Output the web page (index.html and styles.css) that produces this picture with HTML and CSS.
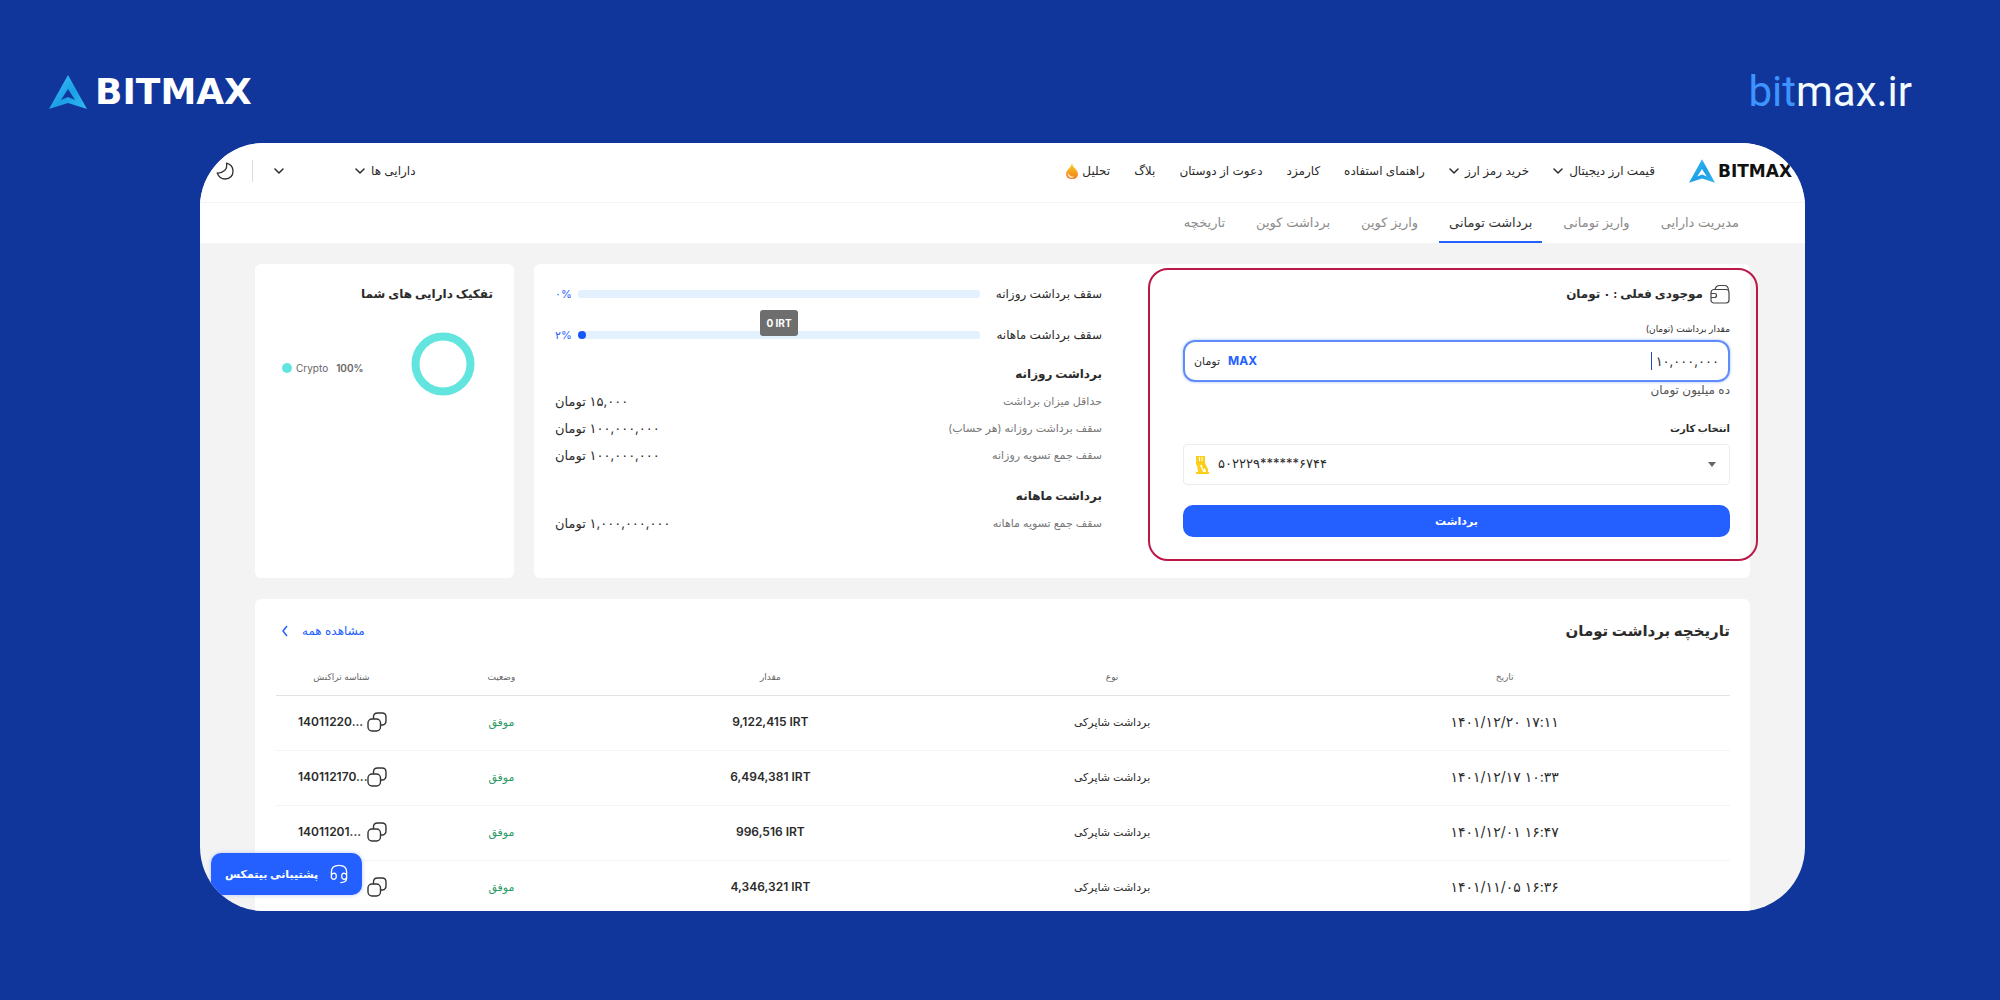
FILE: index.html
```html
<!DOCTYPE html>
<html lang="fa" dir="rtl">
<head>
<meta charset="utf-8">
<title>برداشت تومانی</title>
<meta name="viewport" content="width=device-width, initial-scale=1">
<link rel="stylesheet" href="styles.css">
</head>
<body>
<svg width="0" height="0" class="defs" aria-hidden="true">
  <defs>
    <linearGradient id="mark-fill" x1="0" y1="0" x2="1" y2="1">
      <stop offset="0" stop-color="#41c6f7"/><stop offset=".55" stop-color="#1b9fe8"/><stop offset="1" stop-color="#33b9ef"/>
    </linearGradient>
    <linearGradient id="flame-fill" x1="0" y1="0" x2="0" y2="1">
      <stop offset="0" stop-color="#f7d21c"/><stop offset="1" stop-color="#f47c20"/>
    </linearGradient>
    <symbol id="mark" viewBox="0 0 38 34">
      <path fill="url(#mark-fill)" fill-rule="evenodd" d="M19 0 38 34 19 28 0 34ZM19 14 12 25 19 22 26 25Z"/>
    </symbol>
    <symbol id="down" viewBox="0 0 10 8">
      <path d="M1 2 5 6 9 2" fill="none" stroke="currentColor" stroke-width="1.500" stroke-linecap="round" stroke-linejoin="round"/>
    </symbol>
    <symbol id="copy" viewBox="0 0 20 20">
      <path d="M6.500 7V5Q6.500 1 10.500 1H15Q19 1 19 5V8.500Q19 12.500 15.500 13H13.500" fill="none" stroke="currentColor" stroke-width="1.4"/>
      <rect x="1" y="7" width="12.500" height="12" rx="4" fill="none" stroke="currentColor" stroke-width="1.4"/>
    </symbol>
  </defs>
</svg>

<header class="banner" dir="ltr">
  <a class="logo logo-large" href="#"><svg class="logo-mark"><use href="#mark"/></svg><span>BITMAX</span></a>
  <a class="site" href="#"><span class="site-accent">bit</span>max.ir</a>
</header>

<main class="shell">
  <div class="topbar">
    <a class="logo logo-small" dir="ltr" href="#"><svg class="logo-mark"><use href="#mark"/></svg><span>BITMAX</span></a>
    <nav class="nav">
      <a href="#">قیمت ارز دیجیتال <svg class="down"><use href="#down"/></svg></a>
      <a href="#">خرید رمز ارز <svg class="down"><use href="#down"/></svg></a>
      <a href="#">راهنمای استفاده</a>
      <a href="#">کارمزد</a>
      <a href="#">دعوت از دوستان</a>
      <a href="#">بلاگ</a>
      <a class="hot" href="#">تحلیل
        <svg class="flame" viewBox="0 0 12 16"><path fill="url(#flame-fill)" d="M6 0Q6 3 9 5.500Q12 8 12 11Q12 16 6 16Q0 16 0 11Q0 8 3 5.500Q5.500 3 6 0Z"/><path fill="#fde9c8" d="M2 10Q1.500 13 4 14.500Q6.500 15.500 8 13.500Q3.500 13.500 2 10Z"/></svg>
      </a>
    </nav>
    <div class="tools">
      <a href="#">دارایی ها <svg class="down"><use href="#down"/></svg></a>
      <button class="plain account" aria-label="حساب کاربری"><svg class="down"><use href="#down"/></svg></button>
      <button class="plain theme" aria-label="حالت شب"><svg class="moon" viewBox="0 0 18 18"><path d="M10.500 1.200Q11.500 6 8.500 8.500Q5.500 11.300 1.200 11Q3.500 17 9 17Q17 16.500 17 9Q17 3 10.500 1.200Z" fill="none" stroke="#333" stroke-width="1.3" stroke-linejoin="round"/></svg></button>
    </div>
  </div>

  <nav class="tabs">
    <a href="#">مدیریت دارایی</a>
    <a href="#">واریز تومانی</a>
    <a class="active" href="#">برداشت تومانی</a>
    <a href="#">واریز کوین</a>
    <a href="#">برداشت کوین</a>
    <a href="#">تاریخچه</a>
  </nav>

  <div class="content">
    <div class="panels">
      <section class="card withdraw">
        <div class="highlight"></div>
        <form class="form">
          <h2 class="balance">
            <svg class="wallet" viewBox="0 0 20 20"><rect x="1" y="5.500" width="18" height="13.500" rx="3" fill="none" stroke="#444" stroke-width="1.2"/><path d="M5 5.500Q6 1.500 9.500 1.500H14.500Q18 1.500 18.500 6M1 9.500H4.500Q6.500 9.500 6.500 11.500Q6.500 13.500 4.500 13.500H1" fill="none" stroke="#444" stroke-width="1.2"/></svg>
            موجودی فعلی : ۰ تومان
          </h2>
          <label class="small-label" for="amount">مقدار برداشت (تومان)</label>
          <div class="amount">
            <input id="amount" type="text" dir="ltr" value="۱۰,۰۰۰,۰۰۰">
            <span class="caret"></span>
            <button type="button" class="plain max">MAX</button>
            <span class="unit">تومان</span>
          </div>
          <p class="words">ده میلیون تومان</p>
          <label class="card-label" for="bank-card">انتخاب کارت</label>
          <div class="picker">
            <select id="bank-card" dir="ltr"><option>۵۰۲۲۲۹******۶۷۴۴</option></select>
            <svg class="bank" viewBox="0 0 14 18"><path fill="#fdcf1b" fill-rule="evenodd" d="M1 0H10V7L13 13V16H14V18H1V16H3L2 9H1ZM4 1V5H5V1ZM6.500 1V5H7.500V1ZM5 9 8 16H11L10 12 8 14 7 9Z"/></svg>
            <svg class="triangle" viewBox="0 0 8 5"><path fill="#666" d="M0 0H8L4 5Z"/></svg>
          </div>
          <button type="button" class="submit">برداشت</button>
        </form>
        <div class="limits">
          <div class="limit"><span class="limit-name">سقف برداشت روزانه</span><div class="track"></div><span class="percent" dir="ltr">۰%</span></div>
          <div class="limit"><span class="limit-name">سقف برداشت ماهانه</span><div class="track"><div class="fill" style="width:2%"></div><span class="tip" dir="ltr">0 IRT</span></div><span class="percent" dir="ltr">۲%</span></div>
          <h3>برداشت روزانه</h3>
          <dl>
            <div><dt>حداقل میزان برداشت</dt><dd>۱۵,۰۰۰ تومان</dd></div>
            <div><dt>سقف برداشت روزانه (هر حساب)</dt><dd>۱۰۰,۰۰۰,۰۰۰ تومان</dd></div>
            <div><dt>سقف جمع تسویه روزانه</dt><dd>۱۰۰,۰۰۰,۰۰۰ تومان</dd></div>
          </dl>
          <h3 class="monthly">برداشت ماهانه</h3>
          <dl>
            <div><dt>سقف جمع تسویه ماهانه</dt><dd>۱,۰۰۰,۰۰۰,۰۰۰ تومان</dd></div>
          </dl>
        </div>
      </section>

      <section class="card assets">
        <h2>تفکیک دارایی های شما</h2>
        <div class="chart">
          <svg class="donut" viewBox="0 0 64 64"><circle cx="32" cy="32" r="27.500" fill="none" stroke="#62e5df" stroke-width="8"/></svg>
          <div class="legend" dir="ltr"><span class="dot"></span><span>Crypto</span><b>100%</b></div>
        </div>
      </section>
    </div>

    <section class="card history">
      <div class="history-head">
        <h2>تاریخچه برداشت تومان</h2>
        <a href="#">مشاهده همه <svg class="left" viewBox="0 0 8 12"><path d="M6 1 2 6 6 11" fill="none" stroke="currentColor" stroke-width="1.5"/></svg></a>
      </div>
      <table>
        <colgroup><col class="c-date"><col class="c-type"><col class="c-amount"><col class="c-status"><col class="c-id"></colgroup>
        <thead><tr><th>تاریخ</th><th>نوع</th><th>مقدار</th><th>وضعیت</th><th>شناسه تراکنش</th></tr></thead>
        <tbody>
          <tr><td class="date" dir="ltr">۱۴۰۱/۱۲/۲۰ ۱۷:۱۱</td><td>برداشت شاپرکی</td><td class="num" dir="ltr">9,122,415 IRT</td><td class="ok">موفق</td><td class="num"><div class="ident" dir="ltr"><span>14011220...</span><button class="plain" aria-label="کپی"><svg class="copy"><use href="#copy"/></svg></button></div></td></tr>
          <tr><td class="date" dir="ltr">۱۴۰۱/۱۲/۱۷ ۱۰:۳۳</td><td>برداشت شاپرکی</td><td class="num" dir="ltr">6,494,381 IRT</td><td class="ok">موفق</td><td class="num"><div class="ident" dir="ltr"><span>140112170...</span><button class="plain" aria-label="کپی"><svg class="copy"><use href="#copy"/></svg></button></div></td></tr>
          <tr><td class="date" dir="ltr">۱۴۰۱/۱۲/۰۱ ۱۶:۴۷</td><td>برداشت شاپرکی</td><td class="num" dir="ltr">996,516 IRT</td><td class="ok">موفق</td><td class="num"><div class="ident" dir="ltr"><span>14011201...</span><button class="plain" aria-label="کپی"><svg class="copy"><use href="#copy"/></svg></button></div></td></tr>
          <tr><td class="date" dir="ltr">۱۴۰۱/۱۱/۰۵ ۱۶:۳۶</td><td>برداشت شاپرکی</td><td class="num" dir="ltr">4,346,321 IRT</td><td class="ok">موفق</td><td class="num"><div class="ident" dir="ltr"><span></span><button class="plain" aria-label="کپی"><svg class="copy"><use href="#copy"/></svg></button></div></td></tr>
        </tbody>
      </table>
    </section>
  </div>

  <button class="support">
    <svg class="headset" viewBox="0 0 20 22"><path d="M1.500 15V9Q1.500 1.500 10 1.500Q18.500 1.500 18.500 9V16Q18 20.500 12 20.500M1.500 12.500Q2 10 5 10Q7 10.500 7 13.500Q7 16.500 4.500 17Q1.500 16.500 1.500 14M18.500 12.500Q18 10 15 10Q13 10.500 13 13.500Q13 16.500 15.500 17Q18.500 16.500 18.500 14" fill="none" stroke="#fff" stroke-width="1.4" stroke-linecap="round"/></svg>
    پشتیبانی بیتمکس
  </button>
</main>
</body>
</html>
```
FILE: styles.css
```css
* { box-sizing: border-box; }

body {
  margin: 0;
  height: 100vh;
  padding: 0 10% 89px;
  display: flex;
  flex-direction: column;
  background: #11369b;
  color: #2b2b2b;
  font: 11px/20px Inter, "DejaVu Sans", sans-serif;
}

a { color: inherit; text-decoration: none; }
h2, h3, p, dl, dd { margin: 0; }
h2, h3 { font-size: 12px; font-weight: 700; }
button, input, select { font: inherit; color: inherit; }
svg { flex: none; }
.defs { position: absolute; }
.plain { border: 0; padding: 0; background: none; display: flex; cursor: pointer; }

.banner {
  height: 143px;
  flex: none;
  margin: 0 -112px 0 -151px;
  padding-top: 67px;
  display: flex;
  justify-content: space-between;
}
.logo { display: flex; align-items: center; font-family: "DejaVu Sans", sans-serif; font-weight: 700; }
.logo-large { height: 50px; gap: 8px; color: #fff; font-size: 36px; }
.logo-large .logo-mark { width: 38px; height: 34px; }
.logo-small { gap: 3px; color: #111; font-size: 17px; }
.logo-small .logo-mark { width: 26px; height: 24px; }
.site { color: #f4fbff; font: 42px/50px Roboto, sans-serif; }
.site-accent { color: #3d94ff; }

.shell {
  position: relative;
  flex: 1;
  min-height: 0;
  margin-right: -5px;
  border-radius: 64px;
  overflow: hidden;
  background: #f3f3f3;
}

.topbar {
  height: 60px;
  padding: 0 13px 4px 16px;
  display: flex;
  align-items: center;
  background: #fff;
  border-bottom: 1px solid #f3f3f3;
  font-size: 12px;
}
.nav { display: flex; gap: 24px; margin-right: 34px; }
.nav a, .tools a { display: flex; align-items: center; gap: 6px; white-space: nowrap; }
.down { width: 10px; height: 8px; }
.flame { width: 12px; height: 16px; }
.nav .hot { gap: 4px; }
.tools { margin-right: auto; display: flex; align-items: center; }
.account { margin-right: 71px; }
.theme { height: 22px; margin-right: 21px; padding-right: 18px; border-right: 1px solid #ddd; align-items: center; }
.moon { width: 18px; height: 18px; }

.tabs {
  height: 40px;
  padding: 0 56px;
  display: flex;
  gap: 11px;
  background: #fff;
  color: #8c8c8c;
  font-size: 13px;
}
.tabs a { padding: 9px 10px 0; white-space: nowrap; }
.tabs .active { color: #333; border-bottom: 2px solid #245fff; }

.content { padding: 21px 55px 0; }
.card { background: #fff; border-radius: 6px; }
.panels { display: flex; gap: 20px; margin-bottom: 21px; }

.withdraw {
  position: relative;
  flex: 1;
  height: 314px;
  padding: 20px 20px 0 21px;
  display: grid;
  grid-template-columns: 1fr 1fr;
  gap: 81px;
}
.highlight {
  position: absolute;
  top: 4px;
  right: -8px;
  bottom: 17px;
  width: 610px;
  border: 2px solid #bd1748;
  border-radius: 20px;
  pointer-events: none;
}
.form { display: flex; flex-direction: column; }
.balance { display: flex; align-items: center; gap: 7px; }
.wallet { width: 20px; height: 20px; }
.small-label { margin-top: 15px; font-size: 9px; }
.amount {
  position: relative;
  height: 42px;
  margin-top: 1px;
  padding: 0 9px;
  display: flex;
  align-items: center;
  gap: 8px;
  border: 2px solid #5f8cf8;
  border-radius: 12px;
  box-shadow: 0 0 3px #9dbbff;
}
.amount input { flex: 1; min-width: 0; border: 0; padding: 0; outline: 0; background: none; text-align: right; font-size: 13px; }
.caret { position: absolute; top: 10px; right: 76px; width: 1px; height: 18px; background: #2846c8; }
.max { color: #245fff; font-weight: 700; font-size: 12px; }
.words { font-size: 12px; line-height: 16px; color: #555; }
.card-label { margin-top: 20px; font-weight: 700; font-size: 10px; }
.picker { position: relative; margin-top: 6px; }
.picker select {
  display: block;
  width: 100%;
  height: 41px;
  padding: 0 34px 4px;
  appearance: none;
  background: #fff;
  border: 1px solid #ececec;
  border-radius: 4px;
  font-size: 13px;
}
.bank { position: absolute; left: 12px; top: 12px; width: 14px; height: 18px; }
.triangle { position: absolute; right: 14px; top: 18px; width: 8px; height: 5px; }
.submit {
  height: 32px;
  margin-top: 20px;
  border: 0;
  border-radius: 10px;
  background: #245fff;
  color: #fff;
  font-weight: 700;
}

.limit { height: 20px; margin-bottom: 21px; display: flex; align-items: center; gap: 8px; font-size: 12px; }
.limit-name { width: 114px; white-space: nowrap; }
.track { position: relative; flex: 1; height: 8px; border-radius: 3px; background: #e3f0fd; display: flex; justify-content: flex-end; }
.fill { border-radius: 4px; background: #1658f5; }
.percent { width: 15px; color: #245fff; font-size: 11px; }
.tip {
  position: absolute;
  bottom: 3px;
  left: 182px;
  width: 38px;
  border-radius: 3px;
  background: #6e6e6e;
  color: #fff;
  font: 700 10px/26px Inter, sans-serif;
  text-align: center;
}
.limits h3 { margin-bottom: 5px; font-size: 12px; line-height: 16px; }
.limits .monthly { margin-top: 20px; }
dl div { height: 27px; display: flex; align-items: center; justify-content: space-between; }
dt { color: #777; }
dd { font-size: 13px; }

.assets { width: 259px; padding: 20px 21px; }
.chart { margin-top: 28px; padding: 0 18px 0 6px; display: flex; align-items: center; justify-content: space-between; }
.donut { width: 64px; height: 64px; }
.legend { display: flex; align-items: center; gap: 4px; font-size: 10px; color: #666; padding-top: 8px; }
.legend b { margin-left: 4px; font-weight: 600; }
.dot { width: 10px; height: 10px; border-radius: 50%; background: #62e5df; }

.history { padding: 18px 20px 20px 21px; }
.history-head { display: flex; justify-content: space-between; align-items: center; padding-left: 5px; }
.history-head h2 { font-size: 15px; line-height: 28px; }
.history-head a { display: flex; align-items: center; gap: 13px; color: #245fff; font-size: 12px; }
.left { width: 8px; height: 12px; }
table { width: 100%; margin-top: 14px; table-layout: fixed; border-collapse: collapse; text-align: center; }
th { height: 36px; padding: 0; font-size: 9px; font-weight: 400; color: #666; border-bottom: 1px solid #e2e2e2; }
td { height: 55px; padding: 0 0 2px; border-bottom: 1px solid #f3f3f3; }
.c-date { width: 31%; }
.c-type { width: 23%; }
.c-amount { width: 24%; }
.c-status { width: 13%; }
.c-id { width: 9%; }
.date { font-size: 14px; }
.num { font-size: 12px; font-weight: 600; }
.ok { color: #2c9a66; }
.ident { display: flex; justify-content: space-between; align-items: center; padding: 0 20px 0 22px; }
.copy { width: 20px; height: 20px; color: #333; }

.support {
  position: absolute;
  left: 11px;
  bottom: 16px;
  height: 42px;
  padding: 0 14px;
  display: flex;
  align-items: center;
  gap: 12px;
  border: 0;
  border-radius: 10px;
  background: #245fff;
  box-shadow: 0 0 4px #b9c8f0;
  color: #fff;
  font-size: 11px;
  font-weight: 700;
}
.headset { width: 18px; height: 20px; }
```
